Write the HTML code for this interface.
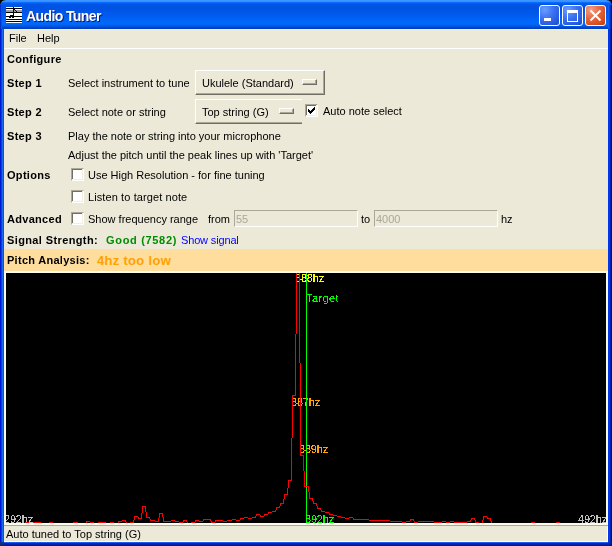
<!DOCTYPE html>
<html><head><meta charset="utf-8"><style>
html,body{margin:0;padding:0;}
body{width:612px;height:546px;position:relative;overflow:hidden;background:#000;font-family:"Liberation Sans",sans-serif;}
.t,.b{will-change:transform;}
.t{position:absolute;font-size:11px;line-height:13px;white-space:pre;color:#000;}
.b{position:absolute;font-size:11px;line-height:13px;white-space:pre;color:#000;font-weight:bold;letter-spacing:0.3px;}
.abs{position:absolute;}
.cb{position:absolute;width:11px;height:11px;background:#fff;border-top:1px solid #aca899;border-left:1px solid #aca899;border-right:1px solid #fff;border-bottom:1px solid #fff;}
.cb::before{content:"";position:absolute;left:0;top:0;width:10px;height:10px;border-top:1px solid #716f64;border-left:1px solid #716f64;}
.cb::after{content:"";position:absolute;left:0;top:0;width:10px;height:10px;border-right:1px solid #f1efe2;border-bottom:1px solid #f1efe2;}
.combo{position:absolute;background:#ece9d8;box-sizing:border-box;}
.tf{position:absolute;box-sizing:border-box;background:#ece9d8;border-top:1px solid #aca899;border-left:1px solid #aca899;border-right:1px solid #fff;border-bottom:1px solid #fff;}
</style></head><body>
<div class="abs" style="left:0;top:0;width:612px;height:546px;background:linear-gradient(to right,#0019cf 0,#0019cf 1px,#0840dd 1px,#0840dd 2px,#166aee 2px,#166aee 3px,#0452e0 3px,#0452e0 4px,transparent 4px,transparent 608px,#0033ee 608px,#0033ee 609px,#0040d8 609px,#0040d8 610px,#0020a8 610px,#0020a8 611px,#001090 611px);border-radius:6px 6px 0 0;"></div>
<div class="abs" style="left:0;top:0;width:612px;height:29px;border-radius:6px 6px 0 0;background:linear-gradient(to bottom,#3d95ff 0,#3d95ff 1px,#3590ff 1px,#3590ff 2px,#0a6cff 2px,#0a6cff 3px,#005ef8 3px,#005ef8 4px,#0055e8 4px,#0053e3 6px,#0054e4 10px,#005cf0 16px,#0062f5 19px,#0069fc 23px,#0066f8 24px,#0062f2 25px,#005be8 26px,#004cd2 27px,#0040c0 28px,#0040c0 29px);"></div>
<div class="abs" style="left:4px;top:542px;width:604px;height:4px;background:linear-gradient(to bottom,#1a5cf0 0,#1a5cf0 1px,#0030d0 1px,#0020b0 2px,#001890 4px);"></div>
<div class="abs" style="left:608px;top:5px;width:4px;height:24px;background:linear-gradient(to right,#0a5cf5 0,#0a5cf5 1px,#0048e0 1px,#0048e0 2px,#0030c0 2px,#0030c0 3px,#001a98 3px)"></div>
<div class="abs" style="left:0;top:5px;width:2px;height:24px;background:linear-gradient(to right,#0030d0 0,#0030d0 1px,#0850e8 1px)"></div>
<svg class="abs" style="left:6px;top:7px" width="16" height="16" shape-rendering="crispEdges">
<rect x="0" y="0" width="16" height="16" fill="#fff"/>
<rect x="0" y="1" width="16" height="1" fill="#000"/>
<rect x="0" y="3" width="16" height="2" fill="#a0a0a0"/>
<rect x="0" y="5" width="16" height="1" fill="#000"/>
<rect x="0" y="9" width="16" height="1" fill="#000"/>
<rect x="0" y="12" width="16" height="1" fill="#000"/>
<rect x="0" y="14" width="16" height="1" fill="#000"/>
<rect x="7" y="0" width="1" height="11" fill="#000"/>
<path d="M8 2h1v1h-1zM9 3h1v1h-1zM10 4h1v1h-1z" fill="#000"/>
<path d="M4 8h4v1h-4zM3 9h5v1h-5zM3 10h2v1h-2zM6 10h2v1h-2z" fill="#000"/>
</svg>
<div class="abs" style="left:27px;top:9px;font-size:14px;line-height:16px;font-weight:bold;color:#0a1870;white-space:pre;letter-spacing:-0.6px;will-change:transform">Audio Tuner</div>
<div class="abs" style="left:26px;top:8px;font-size:14px;line-height:16px;font-weight:bold;color:#fff;white-space:pre;letter-spacing:-0.6px;will-change:transform">Audio Tuner</div>
<div class="abs" style="left:539px;top:5px;width:19px;height:19px;border:1px solid #fff;border-radius:3px;background:radial-gradient(circle at 25% 20%,#6a9cff 0,#3a70f0 45%,#2458e0 80%,#1a48d0 100%);overflow:hidden"><div class="abs" style="left:4px;top:12px;width:7px;height:3px;background:#fff"></div></div>
<div class="abs" style="left:562px;top:5px;width:19px;height:19px;border:1px solid #fff;border-radius:3px;background:radial-gradient(circle at 25% 20%,#6a9cff 0,#3a70f0 45%,#2458e0 80%,#1a48d0 100%);overflow:hidden"><div class="abs" style="left:4px;top:4px;width:9px;height:8px;border:1px solid #fff;border-top:3px solid #fff"></div></div>
<div class="abs" style="left:585px;top:5px;width:19px;height:19px;border:1px solid #fff;border-radius:3px;background:radial-gradient(circle at 25% 20%,#f0a088 0,#e6643c 45%,#d44a1a 80%,#c03a10 100%);overflow:hidden"><svg class="abs" style="left:0;top:0" width="19" height="19"><path d="M5.5 5.5L15.5 15.5M15.5 5.5L5.5 15.5" stroke="#fff" stroke-width="2" transform="translate(-1,-1)"/></svg></div>
<div class="abs" style="left:4px;top:29px;width:604px;height:513px;background:#ece9d8"></div>
<div class="abs" style="left:4px;top:29px;width:604px;height:1px;background:#f7f1dc"></div>
<div class="abs" style="left:4px;top:48px;width:604px;height:1px;background:#fff"></div>
<div class="t" style="left:9px;top:32px;">File</div>
<div class="t" style="left:37px;top:32px;">Help</div>
<div class="b" style="left:7px;top:53px;">Configure</div>
<div class="b" style="left:7px;top:77px;">Step 1</div>
<div class="t" style="left:68px;top:77px;">Select instrument to tune</div>
<div class="combo" style="left:195px;top:70px;width:130px;height:25px;border-top:1px solid #fff;border-left:1px solid #fff;border-right:1px solid #716f64;border-bottom:1px solid #716f64;box-shadow:inset -1px -1px 0 #aca899"></div>
<div class="abs" style="left:302px;top:79px;width:13px;height:4px;background:#ece9d8;border-top:1px solid #fff;border-left:1px solid #fff;border-right:1px solid #716f64;border-bottom:1px solid #716f64;box-shadow:inset -1px -1px 0 #aca899"></div>
<div class="t" style="left:202px;top:77px;">Ukulele (Standard)</div>
<div class="b" style="left:7px;top:106px;">Step 2</div>
<div class="t" style="left:68px;top:106px;">Select note or string</div>
<div class="abs" style="left:195px;top:99px;width:107px;height:25px;overflow:hidden"><div class="combo" style="left:0;top:0;width:130px;height:25px;border-top:1px solid #fff;border-left:1px solid #fff;border-right:1px solid #716f64;border-bottom:1px solid #716f64;box-shadow:inset -1px -1px 0 #aca899"></div></div>
<div class="abs" style="left:279px;top:108px;width:13px;height:4px;background:#ece9d8;border-top:1px solid #fff;border-left:1px solid #fff;border-right:1px solid #716f64;border-bottom:1px solid #716f64;box-shadow:inset -1px -1px 0 #aca899"></div>
<div class="t" style="left:202px;top:106px;">Top string (G)</div>
<div class="cb" style="left:305px;top:104px"><svg width="13" height="13" style="position:absolute;left:0;top:0" shape-rendering="crispEdges"><path d="M2 4h1v3h-1zM3 5h1v3h-1zM4 6h1v3h-1zM5 5h1v3h-1zM6 4h1v3h-1zM7 3h1v3h-1zM8 2h1v3h-1z" fill="#000"/></svg></div>
<div class="t" style="left:323px;top:105px;">Auto note select</div>
<div class="b" style="left:7px;top:130px;">Step 3</div>
<div class="t" style="left:68px;top:130px;">Play the note or string into your microphone</div>
<div class="t" style="left:68px;top:149px;">Adjust the pitch until the peak lines up with 'Target'</div>
<div class="b" style="left:7px;top:169px;">Options</div>
<div class="cb" style="left:71px;top:168px"></div>
<div class="t" style="left:88px;top:169px;">Use High Resolution - for fine tuning</div>
<div class="cb" style="left:71px;top:190px"></div>
<div class="t" style="left:88px;top:191px;letter-spacing:0.1px">Listen to target note</div>
<div class="b" style="left:7px;top:213px;">Advanced</div>
<div class="cb" style="left:71px;top:212px"></div>
<div class="t" style="left:88px;top:213px;">Show frequency range</div>
<div class="t" style="left:208px;top:213px;">from</div>
<div class="tf" style="left:234px;top:210px;width:124px;height:17px"></div>
<div class="t" style="left:236px;top:213px;color:#aca899">55</div>
<div class="t" style="left:361px;top:213px;">to</div>
<div class="tf" style="left:374px;top:210px;width:124px;height:17px"></div>
<div class="t" style="left:376px;top:213px;color:#aca899">4000</div>
<div class="t" style="left:501px;top:213px;">hz</div>
<div class="b" style="left:7px;top:234px;letter-spacing:0.38px">Signal Strength:</div>
<div class="b" style="left:106px;top:234px;color:#008c00;letter-spacing:0.68px">Good (7582)</div>
<div class="t" style="left:181px;top:234px;color:#0000ff;letter-spacing:-0.15px">Show signal</div>
<div class="abs" style="left:4px;top:249px;width:604px;height:22px;background:#ffdd9c"></div>
<div class="b" style="left:7px;top:254px;letter-spacing:0.28px">Pitch Analysis:</div>
<div class="abs" style="left:97px;top:253px;font-size:13px;line-height:16px;font-weight:bold;color:#ffa200;white-space:pre;letter-spacing:0.3px">4hz too low</div>
<div class="abs" style="left:4px;top:271px;width:604px;height:254px;background:#fcfaea"></div>
<div class="abs" style="left:4px;top:525px;width:604px;height:1px;background:#aca899"></div>
<div class="abs" style="left:6px;top:273px;width:600px;height:250px;background:#000"></div>
<svg width="0" height="0" style="position:absolute"><filter id="crisp" x="0" y="0" width="100%" height="100%"><feComponentTransfer><feFuncA type="discrete" tableValues="0 1"/></feComponentTransfer></filter></svg><div class="abs" style="left:6px;top:273px;width:600px;height:250px;overflow:hidden"><div class="abs" style="left:289px;top:-1px;font-size:11px;line-height:13px;color:#ffff00;white-space:pre;letter-spacing:-0.2px;filter:url(#crisp)">388hz</div><div class="abs" style="left:300px;top:19px;font-size:11px;line-height:13px;color:#00ff00;white-space:pre;letter-spacing:0.4px;filter:url(#crisp)">Target</div><div class="abs" style="left:285px;top:123px;font-size:11px;line-height:13px;color:#ffa500;white-space:pre;letter-spacing:-0.2px;filter:url(#crisp)">387hz</div><div class="abs" style="left:293px;top:170px;font-size:11px;line-height:13px;color:#ffa500;white-space:pre;letter-spacing:-0.2px;filter:url(#crisp)">389hz</div><div class="abs" style="left:299px;top:240px;font-size:11px;line-height:13px;color:#00ff00;white-space:pre;letter-spacing:-0.2px;filter:url(#crisp)">392hz</div><div class="abs" style="left:-2px;top:240px;font-size:11px;line-height:13px;color:#c0c0c0;white-space:pre;letter-spacing:-0.2px;filter:url(#crisp)">292hz</div><div class="abs" style="left:572px;top:240px;font-size:11px;line-height:13px;color:#c0c0c0;white-space:pre;letter-spacing:-0.2px;filter:url(#crisp)">492hz</div></div>
<svg class="abs" style="left:6px;top:273px" width="600" height="250" shape-rendering="crispEdges">
<rect x="300" y="0" width="1" height="250" fill="#00ff00"/>
<g transform="translate(-6,-273)"><path d="M296 273h1v61h-1zM299 273h1v90h-1zM295 334h1v62h-1zM300 363h1v93h-1zM293 395h2v1h-2zM292 395h1v43h-1zM291 438h1v43h-1zM301 455h2v1h-2zM303 455h1v16h-1zM304 471h1v16h-1zM289 480h2v1h-2zM288 480h1v8h-1zM305 486h3v1h-3zM308 486h1v6h-1zM287 488h1v7h-1zM309 492h1v7h-1zM285 494h2v1h-2zM284 494h1v5h-1zM310 498h2v1h-2zM312 498h1v3h-1zM283 499h1v5h-1zM313 501h1v3h-1zM281 503h2v1h-2zM314 503h2v1h-2zM280 503h1v3h-1zM316 503h1v3h-1zM143 506h2v1h-2zM279 506h1v2h-1zM317 506h1v3h-1zM145 506h1v6h-1zM142 506h1v7h-1zM277 507h2v1h-2zM276 507h1v3h-1zM318 508h2v1h-2zM320 508h1v2h-1zM275 510h1v2h-1zM321 510h1v2h-1zM272 511h3v1h-3zM322 511h3v1h-3zM269 512h3v1h-3zM325 512h4v1h-4zM268 512h1v2h-1zM146 512h1v6h-1zM160 513h2v1h-2zM329 513h1v2h-1zM162 513h1v4h-1zM159 513h1v5h-1zM141 513h1v6h-1zM257 514h3v1h-3zM265 514h3v1h-3zM330 514h3v1h-3zM256 514h1v2h-1zM264 514h1v2h-1zM333 515h4v1h-4zM260 515h1v2h-1zM135 516h3v1h-3zM261 516h3v1h-3zM337 516h4v1h-4zM484 516h3v1h-3zM255 516h1v2h-1zM134 516h1v4h-1zM483 516h1v4h-1zM147 517h2v1h-2zM244 517h4v1h-4zM252 517h3v1h-3zM341 517h4v1h-4zM349 517h4v1h-4zM138 517h1v2h-1zM149 517h1v2h-1zM487 517h1v2h-1zM163 517h1v5h-1zM139 518h2v1h-2zM241 518h3v1h-3zM248 518h4v1h-4zM345 518h4v1h-4zM472 518h2v1h-2zM488 518h2v1h-2zM240 518h1v2h-1zM353 518h1v2h-1zM471 518h1v2h-1zM474 518h1v2h-1zM490 518h1v3h-1zM158 518h1v4h-1zM204 519h6v1h-6zM232 519h4v1h-4zM354 519h15v1h-15zM411 519h2v1h-2zM150 519h1v2h-1zM203 519h1v2h-1zM210 519h1v2h-1zM410 519h1v2h-1zM413 519h1v2h-1zM122 520h3v1h-3zM151 520h4v1h-4zM171 520h4v1h-4zM184 520h2v1h-2zM196 520h3v1h-3zM216 520h7v1h-7zM227 520h5v1h-5zM236 520h4v1h-4zM369 520h21v1h-21zM125 520h1v2h-1zM183 520h1v2h-1zM186 520h1v2h-1zM195 520h1v2h-1zM215 520h1v2h-1zM470 520h1v2h-1zM133 520h1v3h-1zM475 520h1v3h-1zM482 520h1v3h-1zM87 521h3v1h-3zM119 521h3v1h-3zM155 521h3v1h-3zM164 521h7v1h-7zM175 521h4v1h-4zM199 521h4v1h-4zM223 521h4v1h-4zM390 521h12v1h-12zM406 521h4v1h-4zM418 521h16v1h-16zM442 521h4v1h-4zM450 521h4v1h-4zM467 521h3v1h-3zM86 521h1v2h-1zM118 521h1v2h-1zM211 521h1v2h-1zM414 521h1v2h-1zM491 521h1v2h-1zM25 522h4v1h-4zM33 522h8v1h-8zM49 522h4v1h-4zM73 522h5v1h-5zM90 522h4v1h-4zM98 522h8v1h-8zM110 522h4v1h-4zM126 522h1v1h-1zM130 522h3v1h-3zM179 522h4v1h-4zM187 522h1v1h-1zM191 522h4v1h-4zM212 522h3v1h-3zM402 522h4v1h-4zM415 522h3v1h-3zM434 522h8v1h-8zM446 522h4v1h-4zM454 522h13v1h-13zM476 522h3v1h-3zM531 522h4v1h-4zM556 522h4v1h-4z" fill="#ff0000"/></g>
</svg>
<div class="abs" style="left:4px;top:541px;width:604px;height:1px;background:#fff"></div>
<div class="t" style="left:6px;top:528px;">Auto tuned to Top string (G)</div>
<div class="abs" style="left:607px;top:526px;width:1px;height:16px;background:#fff"></div>
<div class="abs" style="left:0;top:542px;width:4px;height:4px;background:linear-gradient(to bottom,#10308a,#14245e)"></div>
<div class="abs" style="left:608px;top:542px;width:4px;height:4px;background:linear-gradient(to bottom right,#0038d0,#001a90 60%,#001080)"></div>
</body></html>
